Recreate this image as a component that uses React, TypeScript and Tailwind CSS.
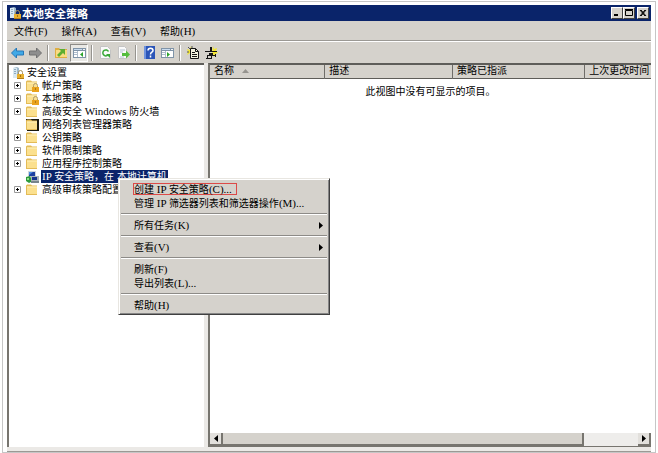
import React from "react";

function Txt({ children }: { children: string }) {
  const runs = children.split(/([\x20-\x7e]+)/).filter(Boolean);
  return (
    <span className="whitespace-pre">
      {runs.map((run, i) =>
        /^[\x20-\x7e]/.test(run) ? (
          <span key={i} className="font-['Liberation_Serif',serif] text-[11px]">
            {run}
          </span>
        ) : (
          <span key={i}>{run}</span>
        )
      )}
    </span>
  );
}

function ServerLock() {
  return (
    <svg className="h-3 w-3 shrink-0" viewBox="0 0 12 12" aria-hidden="true">
      <path d="M1 1l4-1 2 1v10H1z" fill="#9db9cc" />
      <path d="M1 1h4v10H1z" fill="#d9e8f0" />
      <path d="M2 2.500h2M2 4.500h2M2 6.500h2" stroke="#8fabc0" />
      <path d="M6.500 7V5.500a2 2 0 0 1 4 0V7" fill="none" stroke="#a8915a" />
      <path d="M5 7h7v5H5z" fill="#e8b02e" />
      <path d="M5 11.500h7" stroke="#b57d13" />
      <path d="M8 8h1v2H8z" fill="#a87412" />
    </svg>
  );
}

type Kind = "folder" | "lock" | "dark" | "ip";

function NodeIcon({ kind }: { kind: Kind }) {
  if (kind === "ip") {
    return (
      <svg className="h-3 w-[13px] shrink-0" viewBox="0 0 13 12" aria-hidden="true">
        <path d="M2 0h8v6H2z" fill="#cfd6dc" />
        <path d="M3 1h6v4H3z" fill="#1c3fa0" />
        <path d="M3 1h4L3 4z" fill="#4b8ce0" />
        <path d="M5 5h8v5H5z" fill="#aab4ba" />
        <path d="M6 6h5v3H6z" fill="#17358c" />
        <path d="M5 10h8v2H5z" fill="#77848c" />
        <path d="M0 6l4-1 1 2v4l-2 1-3-2z" fill="#2c9a3c" />
        <path d="M1 7h2v2H1z" fill="#8fe08a" />
      </svg>
    );
  }
  return (
    <svg className="h-3 w-[13px] shrink-0" viewBox="0 0 13 12" aria-hidden="true">
      {kind === "dark" && <path d="M0 0h13v12H1v-1H0z" fill="#1a1a10" />}
      <path d="M0 1.500L1 .5h4l1 1h5V11H0z" fill="#e3bb57" />
      <path d="M1 2.500h10V10H1z" fill="#fbe08e" />
      <path d="M1 2.500h10v1H1z" fill="#fff2bf" />
      {kind === "lock" && (
        <>
          <path d="M7.500 7V5.500a2 2 0 0 1 4 0V7" fill="none" stroke="#b09a6a" />
          <path d="M6 7h7v5H6z" fill="#eaa31d" />
          <path d="M9 8h1v2H9z" fill="#b07a14" />
        </>
      )}
    </svg>
  );
}

const nodes: { label: string; kind: Kind; expandable: boolean; selected?: boolean }[] = [
  { label: "帐户策略", kind: "lock", expandable: true },
  { label: "本地策略", kind: "lock", expandable: true },
  { label: "高级安全 Windows 防火墙", kind: "folder", expandable: true },
  { label: "网络列表管理器策略", kind: "dark", expandable: false },
  { label: "公钥策略", kind: "folder", expandable: true },
  { label: "软件限制策略", kind: "folder", expandable: true },
  { label: "应用程序控制策略", kind: "folder", expandable: true },
  { label: "IP 安全策略，在 本地计算机", kind: "ip", expandable: false, selected: true },
  { label: "高级审核策略配置", kind: "folder", expandable: true },
];

const groups: { label: string; sub?: boolean; marked?: boolean }[][] = [
  [{ label: "创建 IP 安全策略(C)...", marked: true }, { label: "管理 IP 筛选器列表和筛选器操作(M)..." }],
  [{ label: "所有任务(K)", sub: true }],
  [{ label: "查看(V)", sub: true }],
  [{ label: "刷新(F)" }, { label: "导出列表(L)..." }],
  [{ label: "帮助(H)" }],
];

function ContextMenu() {
  return (
    <div
      role="menu"
      className="absolute top-[115px] left-[111px] z-10 w-[212px] border border-t-[#e8e6e1] border-r-[#404040] border-b-[#404040] border-l-[#e8e6e1] bg-[#d5d2cc] px-[2px] pt-[3px] pb-[2px] shadow-[inset_1px_1px_0_#fff,inset_-1px_-1px_0_#868686]"
    >
      {groups.map((items, g) => (
        <React.Fragment key={g}>
          {g > 0 && <div role="separator" className="my-[3px] h-[2px] border-t border-b border-t-[#8d8b87] border-b-white" />}
          {items.map((it) => (
            <button key={it.label} role="menuitem" className="flex h-[14px] w-full items-center justify-between pr-1 pl-3 text-left">
              <span className={it.marked ? "flex h-3 items-center border border-[#dc4a48] pr-1" : "border border-transparent"}>
                <Txt>{it.label}</Txt>
              </span>
              {it.sub && (
                <svg className="h-[7px] w-1" viewBox="0 0 4 7" aria-hidden="true">
                  <path d="M0 0l4 3.500L0 7z" fill="#000" />
                </svg>
              )}
            </button>
          ))}
        </React.Fragment>
      ))}
    </div>
  );
}

function Panel() {
  return (
    <>
      <path d="M0 2h13v10H0z" fill="#8094a8" />
      <path d="M1 5h11v6H1z" fill="#fff" />
      <path d="M1 3h8v1H1z" fill="#c9dcf0" />
      <path d="M10 3h2v1h-2z" fill="#f4f4f4" />
      <path d="M4.500 5v6M1 6.500h3M1 8.500h3" stroke="#aebccb" />
    </>
  );
}

const tools: { name: string; art: React.ReactNode; pressed?: boolean; sep?: boolean }[] = [
  { name: "后退", art: <path d="M.5 7l5-5v3h7v4h-7v3z" fill="#40a9e6" stroke="#2678b8" /> },
  { name: "前进", art: <path d="M12.500 7l-5-5v3h-7v4h7v3z" fill="#8e8e8e" stroke="#707070" /> },
  {
    name: "向上",
    sep: true,
    art: (
      <>
        <path d="M0 2h4l1 1h7v9H0z" fill="#dfae43" />
        <path d="M1 4h11v7H1z" fill="#f8dc83" />
        <path d="M2 9l4-4-2-2h6v6L8 7l-4 4z" fill="#5cae32" />
      </>
    ),
  },
  {
    name: "显示树",
    pressed: true,
    art: (
      <>
        <Panel />
        <path d="M10 6L7 8.500l3 2.500z" fill="#2ba32b" />
      </>
    ),
  },
  {
    name: "刷新",
    sep: true,
    art: (
      <>
        <path d="M1.500.5h7l3 3v9h-10z" fill="#fafafa" stroke="#c4c4c4" />
        <path d="M9 9a3 3 0 1 1 .5-3.500" fill="none" stroke="#38a838" strokeWidth="1.500" />
        <path d="M7 8h4v4z" fill="#38a838" />
      </>
    ),
  },
  {
    name: "导出列表",
    art: (
      <>
        <path d="M1.500.5h6l2 2v10h-8z" fill="#fafafa" stroke="#c4c4c4" />
        <path d="M3 4h5M3 6h3M3 11h4" stroke="#b4c4d4" />
        <path d="M5 7h4V4.500L13 8.500l-4 4V10H5z" fill="#54bd3e" />
      </>
    ),
  },
  {
    name: "帮助",
    sep: true,
    art: (
      <>
        <path d="M1 0h11v13H1z" fill="#2b55b8" />
        <path d="M1 0h2v13H1z" fill="#6f93dd" />
        <path d="M5 4.500c0-3 5-3 5 0 0 2-2.500 1.500-2.500 4M7.500 9.500v2" fill="none" stroke="#fff" strokeWidth="1.500" />
      </>
    ),
  },
  {
    name: "操作窗格",
    art: (
      <>
        <Panel />
        <path d="M6 6l3 2.500L6 11z" fill="#2ba32b" />
      </>
    ),
  },
  {
    name: "新建策略",
    sep: true,
    art: (
      <>
        <path d="M0 3l3 1 1-4 1 3h4L6 6v3L3 7 0 9l1-3z" fill="#f2e633" />
        <path d="M3.500 2.500h5l3 3v7h-8z" fill="#f4f3df" stroke="#151515" />
        <path d="M8.500 2.500v3h3M5 6.500h3M5 8.500h5M5 10.500h5" fill="none" stroke="#151515" />
        <path d="M1 1l2 2M5 0v2M0 6h2" stroke="#555" />
      </>
    ),
  },
  {
    name: "管理筛选器",
    art: (
      <>
        <path d="M8 0l1 3 3-1-1 3 2 2-3 1-1 3-2-4z" fill="#f2e633" />
        <path d="M0 5.500h12M2 9.500h9M1 12.500h5" stroke="#151515" />
        <path d="M5 1h2v4H5zM4 7h4v2H4z" fill="#151515" />
        <path d="M2.500 9v3M10.500 8v3M6.500 9v4" stroke="#151515" />
      </>
    ),
  },
];

const menus = ["文件(F)", "操作(A)", "查看(V)", "帮助(H)"];

function CaptionButton({ name, d }: { name: string; d: string }) {
  return (
    <button
      aria-label={name}
      className="flex h-3 w-3 items-center justify-center border border-t-white border-r-[#404040] border-b-[#404040] border-l-white bg-[#d5d2cc]"
    >
      <svg className="h-2 w-2" viewBox="0 0 8 8" aria-hidden="true">
        <path d={d} fill="none" stroke="#000" />
      </svg>
    </button>
  );
}

function ScrollButton({ name, d }: { name: string; d: string }) {
  return (
    <button
      aria-label={name}
      className="flex w-[13px] shrink-0 items-center justify-center border-r-2 border-b-2 border-[#77756f] bg-[#e2e0dc]"
    >
      <svg className="h-[7px] w-1" viewBox="0 0 4 7" aria-hidden="true">
        <path d={d} fill="#000" />
      </svg>
    </button>
  );
}

export default function App() {
  return (
    <div className="h-screen bg-white px-[2px] pt-px font-['Liberation_Sans','Noto_Sans_CJK_SC',sans-serif] text-[10px] leading-3 text-black">
      <div className="flex h-full flex-col border border-[#c6c6c6] pt-[3px] pr-1 pl-1">
        <header className="flex h-4 shrink-0 items-center bg-[#0a246a] px-[2px] text-white">
          <ServerLock />
          <h1 className="ml-px flex-1 pt-px text-[11px] font-bold">本地安全策略</h1>
          <CaptionButton name="最小化" d="M1 6.500h4M1 5.500h4" />
          <CaptionButton name="最大化" d="M.5 1.500h7v5h-7zM0 .5h8" />
          <div className="ml-[2px] flex">
            <CaptionButton name="关闭" d="M1 1l5 6M2 1l5 6M7 1L2 7M6 1L1 7" />
          </div>
        </header>

        <nav className="flex h-5 shrink-0 items-center gap-[14px] border-b border-[#9b9994] bg-[#d5d2cc] pt-[2px] pl-[7px]">
          {menus.map((m) => (
            <button key={m}>
              <Txt>{m}</Txt>
            </button>
          ))}
        </nav>

        <div role="toolbar" className="flex h-[22px] shrink-0 items-center border-t border-t-white bg-[#d5d2cc] pl-px">
          {tools.map((t) => (
            <React.Fragment key={t.name}>
              {t.sep && <span className="mx-[3px] h-4 w-[2px] border-r border-l border-r-white border-l-[#96948f]" />}
              <button
                aria-label={t.name}
                className={
                  t.pressed
                    ? "flex h-[18px] w-[18px] items-center justify-center border border-t-[#8d8b87] border-r-white border-b-white border-l-[#8d8b87] bg-[#e9e8e4]"
                    : "flex h-[18px] w-[18px] items-center justify-center"
                }
              >
                <svg className="h-[13px] w-[13px]" viewBox="0 0 13 13" aria-hidden="true">
                  {t.art}
                </svg>
              </button>
            </React.Fragment>
          ))}
        </div>

        <main className="relative flex min-h-0 flex-1 bg-[#ebe9e6]">
          <aside className="w-[197px] shrink-0 border-t-2 border-l-2 border-[#77756f] border-t-[#5e5d59] bg-white pt-px">
            <div className="flex h-[13px] items-center gap-[3px] pl-[3px]">
              <ServerLock />
              <span>安全设置</span>
            </div>
            <ul role="tree">
              {nodes.map((n) => (
                <li key={n.label} role="treeitem" aria-selected={!!n.selected} className="flex h-[13px] items-center pl-[5px]">
                  <span className="flex w-3 shrink-0">
                    {n.expandable && (
                      <button aria-label={"展开" + n.label}>
                        <svg className="h-[7px] w-[7px]" viewBox="0 0 7 7" aria-hidden="true">
                          <path d="M.5.5h6v6h-6z" fill="#fff" stroke="#9a9a9a" />
                          <path d="M2 3.500h3M3.500 2v3" stroke="#000" />
                        </svg>
                      </button>
                    )}
                  </span>
                  <NodeIcon kind={n.kind} />
                  <span className={n.selected ? "ml-[2px] bg-[#0a246a] px-px text-white" : "ml-[2px] px-px"}>
                    <Txt>{n.label}</Txt>
                  </span>
                </li>
              ))}
            </ul>
          </aside>

          <section className="ml-1 flex min-w-0 flex-1 flex-col border-t-2 border-b border-l-2 border-[#77756f] border-t-[#5e5d59] bg-white">
            <table className="w-full table-fixed border-collapse">
              <thead>
                <tr className="h-[13px] border-b border-[#5e5d59] bg-[#d5d2cc] text-left">
                  <th className="w-[26%] border-r border-[#6f6d69] p-0 pl-1 font-normal">
                    <span className="flex items-center gap-2">
                      名称
                      <svg className="h-1 w-[7px]" viewBox="0 0 7 4" aria-hidden="true">
                        <path d="M0 4l3.500-4L7 4z" fill="#96948f" />
                      </svg>
                    </span>
                  </th>
                  <th className="w-[29%] border-r border-[#6f6d69] p-0 pl-1 font-normal">描述</th>
                  <th className="w-[30%] border-r border-[#6f6d69] p-0 pl-1 font-normal">策略已指派</th>
                  <th className="overflow-hidden p-0 pl-1 font-normal whitespace-nowrap">上次更改时间</th>
                </tr>
              </thead>
              <tbody>
                <tr>
                  <td colSpan={4} className="p-0 pt-[7px] text-center">
                    此视图中没有可显示的项目。
                  </td>
                </tr>
              </tbody>
            </table>
            <div className="mt-auto flex h-[13px] bg-[#eeedeb]">
              <ScrollButton name="向左滚动" d="M4 0L0 3.500 4 7z" />
              <div className="flex-1">
                <div className="h-full w-[87%] border-r-2 border-b-2 border-[#77756f] bg-[#d5d2cc]" />
              </div>
              <ScrollButton name="向右滚动" d="M0 0l4 3.500L0 7z" />
            </div>
          </section>

          <ContextMenu />
        </main>
        <footer className="h-[5px] shrink-0 border-b border-[#9b9994] bg-[#ebe9e6]" />
      </div>
    </div>
  );
}
